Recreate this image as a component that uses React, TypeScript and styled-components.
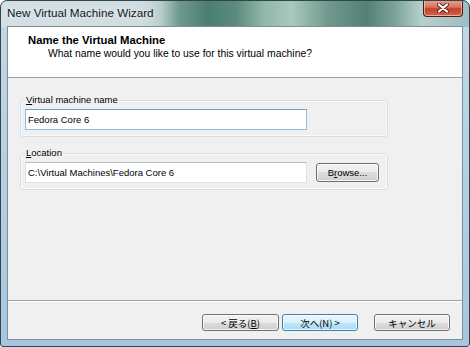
import React from "react";
import styled, { createGlobalStyle } from "styled-components";

const GlobalStyle = createGlobalStyle`
  html, body { margin: 0; padding: 0; background: #ffffff; }
  body { font-family: "Liberation Sans", Arial, sans-serif; color: #000; }
  * { box-sizing: border-box; }
`;

const Window = styled.div`
  width: 470px;
  height: 347px;
  display: flex;
  flex-direction: column;
  border: 1px solid #34444f;
  border-radius: 7px 7px 3px 3px;
  padding: 0 6px 6px 6px;
  overflow: hidden;
  background:
    linear-gradient(
        to right,
        #d3dfe4 0%,
        #d0dde0 30%,
        #b9cfcc 34%,
        #6f9a8e 38%,
        #4b7f72 44%,
        #5a8a7c 50%,
        #8fb6a8 56%,
        #a9cabd 62%,
        #6f998c 70%,
        #557f74 78%,
        #7aa398 84%,
        #b7d0cb 90%,
        #9fbcc4 100%
      )
      top left / 100% 26px no-repeat,
    linear-gradient(to bottom, #c4d8e4 0%, #b4cee0 60%, #a6c6de 100%);
`;

const TitleBar = styled.div`
  height: 25px;
  display: flex;
  align-items: flex-start;
  justify-content: space-between;
  flex: none;
`;

const TitleText = styled.div`
  margin-top: 4px;
  font-size: 11.7px;
  line-height: 15px;
  color: #10181c;
  text-shadow: 0 0 6px rgba(255, 255, 255, 0.9);
`;

const CloseButton = styled.div`
  width: 40px;
  height: 17px;
  margin-top: -1px;
  border: 1px solid #4a1c16;
  border-top: none;
  border-radius: 0 0 4px 4px;
  background: linear-gradient(to bottom, #e7a393 0%, #d7735f 45%, #c2402b 55%, #d2634c 100%);
  box-shadow: inset 0 0 0 1px rgba(255, 220, 210, 0.6);
  display: flex;
  align-items: center;
  justify-content: center;
`;

const Client = styled.div`
  flex: 1;
  display: flex;
  flex-direction: column;
  background: #f0f0f0;
  border: 1px solid #7f8e99;
`;

const Header = styled.div`
  height: 51px;
  flex: none;
  background: #ffffff;
  border-bottom: 1px solid #a0a0a0;
  padding: 6px 0 0 20px;
`;

const HeaderTitle = styled.div`
  font-weight: bold;
  font-size: 11.3px;
  line-height: 14px;
`;

const HeaderSub = styled.div`
  margin-left: 20px;
  font-size: 10.35px;
  line-height: 14px;
`;

const Body = styled.div`
  flex: 1;
  padding: 15px 0 0 12px;
  display: flex;
  flex-direction: column;
  gap: 9px;
`;

const Group = styled.fieldset`
  margin: 0;
  width: 368px;
  border: 1px solid #d5dfe5;
  border-radius: 3px;
  padding: 2px 0 6px 4px;
  box-shadow: inset 0 0 0 1px #fafafa;
`;

const Legend = styled.legend`
  font-size: 9.5px;
  line-height: 14px;
  padding: 0 1px;
  color: #000;
`;

const Key = styled.span`
  text-decoration: underline;
`;

const Row = styled.div`
  display: flex;
  align-items: center;
  gap: 9px;
`;

const TextBox = styled.input<{ $focused?: boolean }>`
  width: 282px;
  height: 21px;
  margin: 0;
  padding: 0 2px;
  font-family: "Liberation Sans", Arial, sans-serif;
  font-size: 9.5px;
  color: #000;
  background: #ffffff;
  outline: none;
  border: 1px solid ${(p) => (p.$focused ? "#8fbde3" : "#dde2e8")};
  border-top-color: ${(p) => (p.$focused ? "#6aa3d3" : "#b8bcc2")};
`;

const Button = styled.div<{ $default?: boolean; $w: number; $h: number }>`
  width: ${(p) => p.$w}px;
  height: ${(p) => p.$h}px;
  flex: none;
  display: flex;
  align-items: center;
  justify-content: center;
  border-radius: 3px;
  border: 1px solid ${(p) => (p.$default ? "#3c7fb1" : "#707070")};
  background: ${(p) =>
    p.$default
      ? "linear-gradient(to bottom, #eaf6fd 0%, #d9f0fc 50%, #bee6fd 50%, #a9dbf6 100%)"
      : "linear-gradient(to bottom, #f2f2f2 0%, #ebebeb 50%, #dddddd 50%, #cfcfcf 100%)"};
  box-shadow: inset 0 0 0 1px rgba(255, 255, 255, 0.75);
  font-size: 9.5px;
  color: #000;
  white-space: nowrap;
`;

const JpLabel = styled.span`
  font-family: "Noto Sans CJK JP", "Liberation Sans", sans-serif;
  font-size: 9.5px;
  line-height: 12px;
`;

const Footer = styled.div`
  height: 39px;
  flex: none;
  border-top: 1px solid #a0a0a0;
  box-shadow: inset 0 1px 0 #ffffff;
  display: flex;
  justify-content: flex-end;
  align-items: flex-start;
  padding: 13px 12px 0 0;
  gap: 3px;
`;

const Spacer = styled.div`
  width: 10px;
`;

const CloseGlyph = () => (
  <svg width="12" height="10" viewBox="0 0 12 10">
    <path d="M2 1.5 L10 8.5 M10 1.5 L2 8.5" stroke="#5b2218" strokeWidth="4" strokeLinecap="round" />
    <path d="M2 1.5 L10 8.5 M10 1.5 L2 8.5" stroke="#ffffff" strokeWidth="2.2" strokeLinecap="round" />
  </svg>
);

export default function App() {
  return (
    <>
      <GlobalStyle />
      <Window>
        <TitleBar>
          <TitleText>New Virtual Machine Wizard</TitleText>
          <CloseButton>
            <CloseGlyph />
          </CloseButton>
        </TitleBar>
        <Client>
          <Header>
            <HeaderTitle>Name the Virtual Machine</HeaderTitle>
            <HeaderSub>What name would you like to use for this virtual machine?</HeaderSub>
          </Header>
          <Body>
            <Group>
              <Legend>
                <Key>V</Key>irtual machine name
              </Legend>
              <Row>
                <TextBox $focused readOnly value="Fedora Core 6" />
              </Row>
            </Group>
            <Group>
              <Legend>
                <Key>L</Key>ocation
              </Legend>
              <Row>
                <TextBox readOnly value="C:\Virtual Machines\Fedora Core 6" />
                <Button $w={63} $h={19}>
                  B<Key>r</Key>owse...
                </Button>
              </Row>
            </Group>
          </Body>
          <Footer>
            <Button $w={77} $h={17}>
              <JpLabel>
                &lt; 戻る(<Key>B</Key>)
              </JpLabel>
            </Button>
            <Button $default $w={76} $h={17}>
              <JpLabel>次へ(N) &gt;</JpLabel>
            </Button>
            <Spacer />
            <Button $w={76} $h={17}>
              <JpLabel>キャンセル</JpLabel>
            </Button>
          </Footer>
        </Client>
      </Window>
    </>
  );
}
